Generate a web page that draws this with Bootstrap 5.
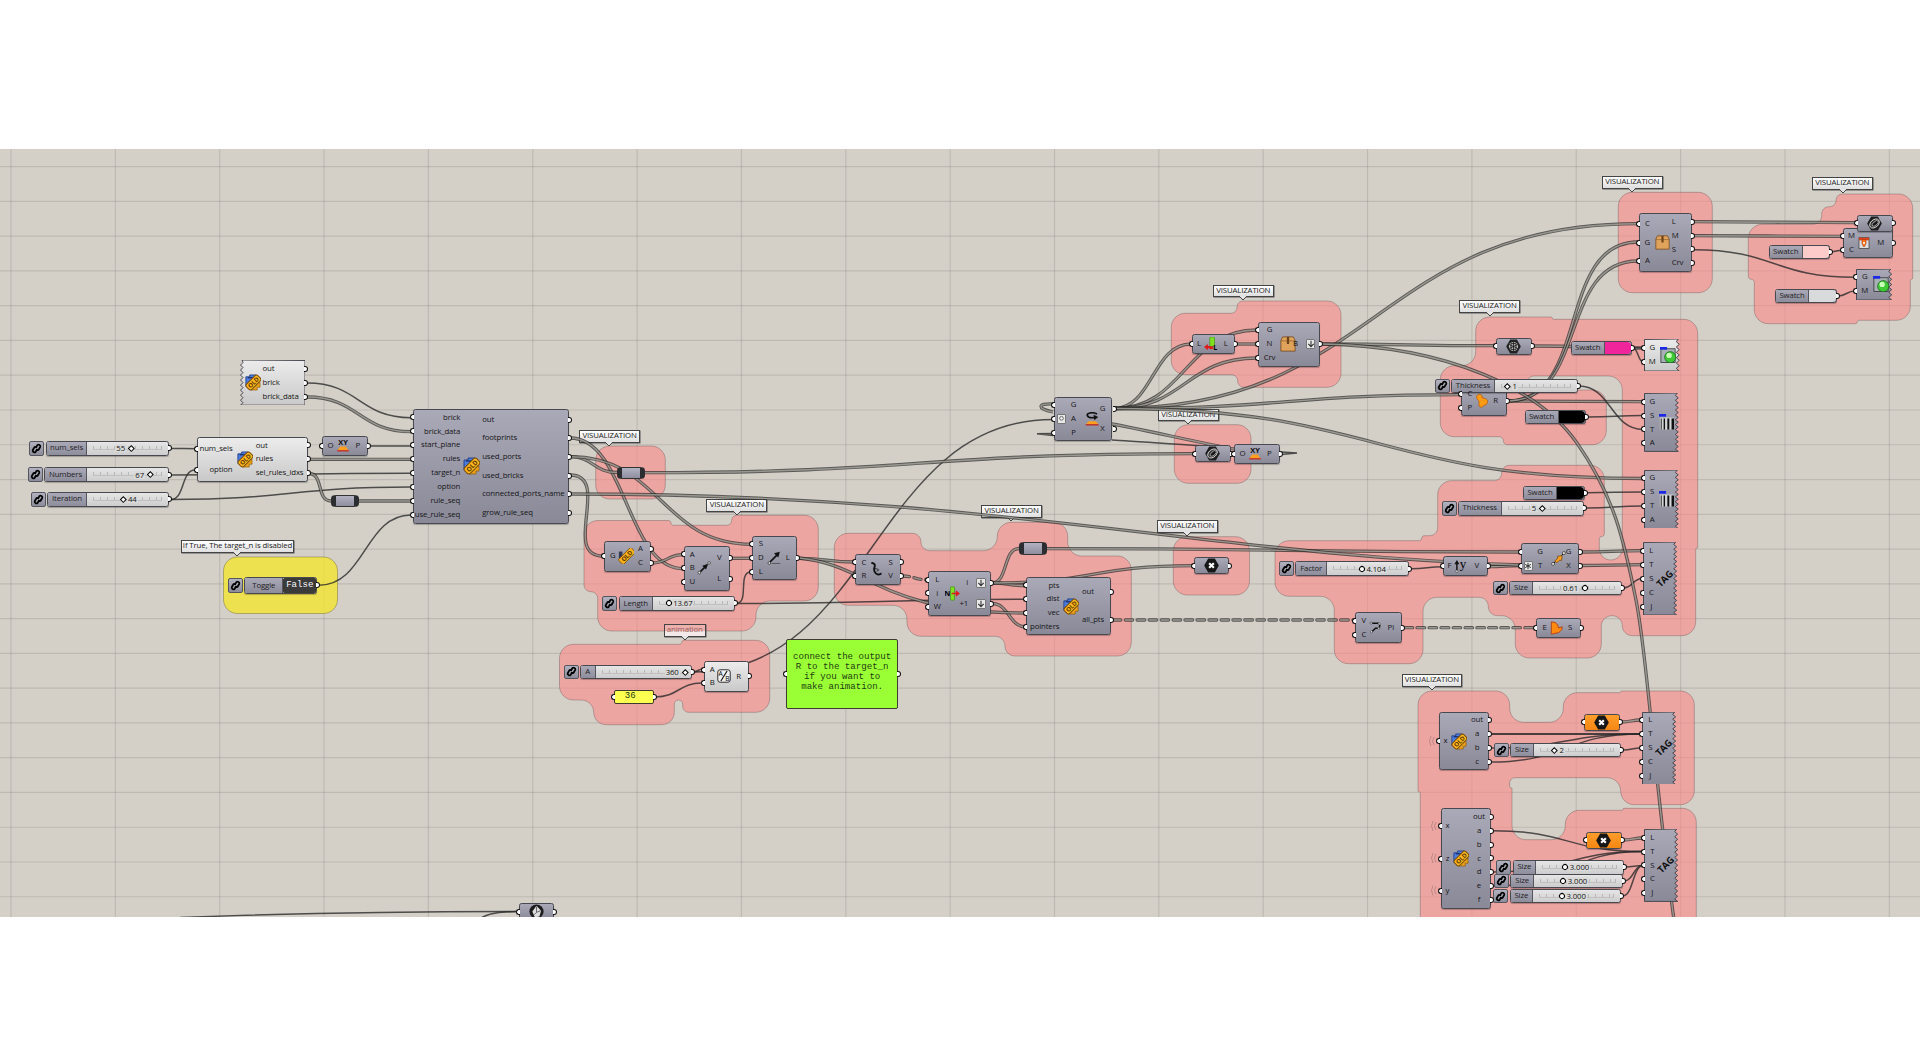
<!DOCTYPE html>
<html lang="en">
<head>
    <meta charset="UTF-8">
    <meta name="viewport" content="width=device-width, initial-scale=1.0">
    <title>Brick aggregation definition</title>
    <link href="https://cdn.jsdelivr.net/npm/bootstrap@5.3.0/dist/css/bootstrap.min.css" rel="stylesheet">
    <style>
        body { font-family: "Open Sans", "Noto Sans", sans-serif; font-size: 7.8px; letter-spacing: -.12px; line-height: 1; color: #161616; padding-top: 149px; }
        .board { height: 768px; background: #d4d0c8; }
        /* everything on the board is placed in page coordinates */
        .board-inner { width: 1920px; height: 1063px; margin-top: -149px; }
        .layer { position: absolute; left: 0; top: 0; pointer-events: none; }
        .pink { fill: rgba(255, 135, 134, .58); stroke: rgba(90, 70, 70, .35); }
        .yellow { fill: rgba(244, 229, 50, .8); stroke: rgba(110, 105, 40, .45); }

        .gh { position: absolute; padding: .5px 0; border: 1px solid #484850; border-radius: 2.5px; background: linear-gradient(#aaa9b8, #8a8998); box-shadow: 0 1px 1px rgba(0, 0, 0, .25); }
        .gh.light { background: linear-gradient(#ececec, #c9c9c9); }
        .gh.orange { background: linear-gradient(#ff9d2c, #f58713); }
        .gh.jagged { background: none; border-color: transparent; box-shadow: none; }
        .gh .ports { z-index: 1; flex-shrink: 0; }
        .plug { position: absolute; top: 50%; width: 4px; height: 6px; margin-top: -3px; background: #fff; border: 1.2px solid #111; }
        .plug.l { left: -4px; border-right: 0; border-radius: 4px 0 0 4px; }
        .plug.r { right: -4px; border-left: 0; border-radius: 0 4px 4px 0; }
        .mini { width: 9.5px; height: 10px; border: 1px solid #777; border-radius: 1px; background: #e8e8e8; padding: 0; }

        .chain { position: absolute; width: 15px; height: 14.5px; padding: 0; border: 1px solid #55555e; border-radius: 2px; background: linear-gradient(#b3b2c0, #8d8c9b); }
        .cap { background: linear-gradient(#aaa9b8, #8e8d9c); border-right: 1px solid #55555e; color: #222; }
        .track { background: linear-gradient(#e6e6e6, #cdcdcd); border-radius: 0 2px 2px 0; }
        .ticks { position: absolute; left: 6px; right: 6px; top: 4px; height: 4px; border-bottom: 1px solid #c0c0c0; border-right: 1px solid #b5b5b5; background: repeating-linear-gradient(90deg, #b8b8b8 0 1px, transparent 1px 7px); }
        .knob { position: absolute; top: 4px; width: 4.6px; height: 4.6px; border: 1.2px solid #000; background: #fff; transform: rotate(45deg); }
        .knob.round { border-radius: 50%; width: 6px; height: 6px; top: 3.2px; border-width: 1.7px; }
        .num { position: absolute; top: 2.2px; padding: 0 1px; background: #dadada; line-height: 8px; }

        .pill { position: absolute; width: 28px; height: 12.5px; border: 1px solid #333; border-radius: 4px; border-left: 5px solid #2c2d30; border-right: 5px solid #2c2d30; background: linear-gradient(#b3b2c2, #8f8e9e); }
        .tag { position: absolute; height: 12.6px; border: 1px solid #444; background: linear-gradient(#fff, #dfdfdf); box-shadow: .5px .5px 0 #555; color: #222; padding-bottom: 1px; }
        .tag.faded { background: linear-gradient(#eeb0ad 50%, #f2e9e8 60%); color: #93605d; }
        .tag svg { position: absolute; bottom: -5px; }
        .note { position: absolute; border: 1px solid #3c3c30; border-radius: 2px; font-family: "Liberation Mono", monospace; font-size: 9.1px; letter-spacing: 0; line-height: 10px; color: #1d3c10; }
    </style>
</head>
<body class="bg-white overflow-hidden">

    <!-- Icons -->
    <svg width="0" height="0" class="position-absolute">
        <defs>
            <symbol id="i-chain" viewBox="0 0 14 14"><g fill="none" stroke="#000" stroke-width="2.3" stroke-linecap="round"><path d="M6.500 5.500L8 2.800a2.200 2.200 0 0 1 3.600 2.400L10 8a1.800 1.800 0 0 1-2.400.8"/><path d="M7.500 8.500L6 11.200a2.200 2.200 0 0 1-3.600-2.400L4 6a1.800 1.800 0 0 1 2.400-.8"/></g></symbol>
            <symbol id="i-py" viewBox="0 0 18 18"><path d="M2 3h4V1h7v6L7 13H2z" fill="#4a7de0" stroke="#1e3c86" stroke-width=".9"/><path d="M4 4h6" stroke="#14265c" stroke-width="1.200"/><path d="M12 9h5v5h-3v3H7l-2-3z" fill="#e9a21b" stroke="#8a5606" stroke-width=".7"/><g transform="rotate(-45 10 9)"><rect x="1.500" y="5" width="17" height="8" rx="2.500" fill="#fbb81f" stroke="#7a4c05" stroke-width="1"/><text x="10" y="11.400" font-size="6.500" font-weight="700" text-anchor="middle" fill="#5a3500">OLD</text></g></symbol>
            <symbol id="i-old" viewBox="0 0 18 18"><path d="M1 4h4v8H1z" fill="#333a55"/><g transform="rotate(-45 10 9)"><rect x="0" y="5" width="20" height="8" rx="1" fill="#f5b11d" stroke="#7a4c05" stroke-width=".9"/><text x="10" y="11.500" font-size="7" font-weight="700" text-anchor="middle" fill="#5a3500">OLD</text></g></symbol>
            <symbol id="i-xy" viewBox="0 0 18 18"><text x="9" y="8" font-size="9.500" font-weight="700" text-anchor="middle" fill="#111">XY</text><path d="M5.500 9.500h7l3.500 5H2z" fill="#ff9f1c"/><path d="M1.500 15.200h15" stroke="#c8261b" stroke-width="1.600"/></symbol>
            <symbol id="i-vec" viewBox="0 0 18 18"><path d="M4 14L13 5" stroke="#111" stroke-width="2"/><path d="M14 4l-2.300 7-5-5z" fill="#111"/><circle cx="3" cy="15" r="1.700" fill="#eee" stroke="#222" stroke-width=".9"/><circle cx="15.500" cy="2.500" r="1.700" fill="#eee" stroke="#222" stroke-width=".9"/></symbol>
            <symbol id="i-line" viewBox="0 0 18 18"><path d="M4 14L13 5" stroke="#111" stroke-width="2"/><path d="M16.500 1l-2 7.500-5.500-5.500z" fill="#111"/><circle cx="3" cy="15.500" r="1.700" fill="#eee" stroke="#222" stroke-width=".9"/><path d="M6 16h11" stroke="#333" stroke-width=".8"/></symbol>
            <symbol id="i-ab" viewBox="0 0 18 18"><rect x="1" y="1" width="16" height="16" rx="3" fill="#f0f0f0" stroke="#222" stroke-width="1.200"/><text x="2" y="8.500" font-size="8.500">A</text><path d="M5 15.500L13 2.500" stroke="#111" stroke-width="1.500"/><text x="10.500" y="16" font-size="8.500">B</text></symbol>
            <symbol id="i-curve" viewBox="0 0 18 18"><path d="M3 1c5 1 5 3 4 6s0 8 4 9c3 .5 4-1 5-1.500" fill="none" stroke="#111" stroke-width="2.400"/><path d="M6 8l6 1.500M10 12l3-2" stroke="#111"/></symbol>
            <symbol id="i-list" viewBox="0 0 18 18"><text x="-1" y="12" font-size="9" font-weight="700">N</text><rect x="6.500" y="1" width="5" height="16" rx="1" fill="#7ee021" stroke="#3c8a10" stroke-width=".8"/><path d="M8 8h5V5l5 4-5 4v-3H8z" fill="#e01a1a"/></symbol>
            <symbol id="i-list2" viewBox="0 0 18 18"><rect x="7.500" y="0" width="6" height="12" rx="1" fill="#7ee021" stroke="#3c8a10" stroke-width=".8"/><path d="M8 11.500H5V9L0 12.800 5 17v-2.500h3z" fill="#e01a1a"/><text x="12" y="17" font-size="9" font-weight="700">L</text><rect x="7" y="12" width="4.500" height="3.500" fill="#e01a1a"/></symbol>
            <symbol id="i-box" viewBox="0 0 18 18"><path d="M3 1h12l2 4v12H1V5z" fill="#dfa35c" stroke="#714619" stroke-width=".9"/><path d="M1 5.500h16" stroke="#8e5d28" stroke-width=".8"/><rect x="7.700" y="1" width="2.600" height="8" fill="#6e4219"/></symbol>
            <symbol id="i-rot" viewBox="0 0 18 18"><path d="M15.500 2.500C9-.5 2 1.500 3 4.500s7 3 10 2.500" fill="none" stroke="#111" stroke-width="2.200"/><path d="M11 3.500l6 3-5 4z" fill="#111"/><path d="M5 11.800h8.500L17 15.500H1.500z" fill="#ff9f1c"/><path d="M1 16.500h16.500" stroke="#c8261b" stroke-width="1.700"/></symbol>
            <symbol id="i-ring" viewBox="0 0 18 18"><path d="M5 .5h8L17.800 9 13 17.500H5L.2 9z" fill="#1e1e1e"/><ellipse cx="9" cy="9" rx="6.500" ry="4.500" transform="rotate(-40 9 9)" fill="#3a3a3a" stroke="#ddd" stroke-width="1.100"/><ellipse cx="9.700" cy="9.500" rx="4.500" ry="2.200" transform="rotate(-40 9 9)" fill="#161616" stroke="#bbb" stroke-width=".9"/></symbol>
            <symbol id="i-x" viewBox="0 0 18 18"><path d="M5 .5h8L17.800 9 13 17.500H5L.2 9z" fill="#161616"/><path d="M6.200 6.200l5.600 5.600M11.800 6.200l-5.600 5.600" stroke="#fff" stroke-width="2.600"/></symbol>
            <symbol id="i-mesh" viewBox="0 0 18 18"><path d="M5 .5h8L17.800 9 13 17.500H5L.2 9z" fill="#222"/><circle cx="9" cy="9" r="5.500" fill="#b5b5b5"/><path d="M9 3.500v11M4 6.500l10 5M14 6.500l-10 5M6 5.500h6v7H6z" stroke="#111" stroke-width=".9" fill="none"/></symbol>
            <symbol id="i-brep" viewBox="0 0 18 18"><circle cx="9" cy="9" r="8.500" fill="#1c1c1c"/><path d="M9 2l5.500 6-2 7-5.500 1-3-7z" fill="#ddd"/><path d="M9 3v7l5-2M9 10l-3 3" stroke="#555" fill="none"/></symbol>
            <symbol id="i-y" viewBox="0 0 18 18"><path d="M4 15V4" stroke="#111" stroke-width="2"/><path d="M4 0L.5 6h7z" fill="#111"/><circle cx="4" cy="15.500" r="1.700" fill="#eee" stroke="#222" stroke-width=".8"/><text x="8" y="11" font-size="18" font-family="Liberation Serif">y</text></symbol>
            <symbol id="i-eval" viewBox="0 0 18 18"><path d="M3 15L15 3" stroke="#111" stroke-width="1.200"/><path d="M4.500 12l4-3.500-1-2 6-1-1 6-2-.5-3.500 3z" fill="#ff9f1c" stroke="#704005" stroke-width=".8"/><circle cx="2.500" cy="15.500" r="1.800" fill="#eee" stroke="#222" stroke-width=".8"/><circle cx="15.500" cy="2.500" r="1.800" fill="#eee" stroke="#222" stroke-width=".8"/></symbol>
            <symbol id="i-poly" viewBox="0 0 18 18"><path d="M2 3h11l2 3-1 4H9l-5 5" fill="none" stroke="#111" stroke-width="2"/><g fill="#eee" stroke="#222" stroke-width=".7"><circle cx="3" cy="3" r="1.500"/><circle cx="14" cy="4" r="1.500"/><circle cx="13.500" cy="10" r="1.500"/><circle cx="3.500" cy="15" r="1.500"/></g></symbol>
            <symbol id="i-srf" viewBox="0 0 18 18"><path d="M3 1l5 1c3 2 4 4 4 7l5-1.500c0 4-2 6-5 7.500L3 17z" fill="#ff8a12" stroke="#b03a10" stroke-width="1.100"/></symbol>
            <symbol id="i-blob" viewBox="0 0 18 18"><path d="M4 1c4-1 6 1 5 4 4 0 8 2 7 6s-5 3-6 5-5 1-5-2 1-4-1-6-3-6 0-7z" fill="#ff9a14" stroke="#b35a06" stroke-width="1"/></symbol>
            <symbol id="i-ball" viewBox="0 0 18 18"><rect x="1" y="2" width="16" height="15.500" fill="#a9b0b5" stroke="#333" stroke-width=".9"/><rect x="0" y="0" width="8" height="3" fill="#1a28e8"/><circle cx="11.500" cy="11.500" r="6.300" fill="#3fc935" stroke="#14601b" stroke-width=".8"/><circle cx="10.300" cy="9.500" r="3" fill="#caffba"/></symbol>
            <symbol id="i-bars" viewBox="0 0 18 18"><rect x="1" y="4" width="16" height="13.500" fill="#d4d6d8"/><rect x="0" y="0" width="8" height="3" fill="#1a28e8"/><path d="M2.500 17.500V5" stroke="#111"/><path d="M6 17.500V5" stroke="#111" stroke-width="1.600"/><path d="M10.500 17.500V5" stroke="#111" stroke-width="2.200"/><path d="M15.500 17.500V5" stroke="#111" stroke-width="2.800"/></symbol>
            <symbol id="i-mat" viewBox="0 0 18 18"><rect x="1.500" y="1" width="15" height="16" fill="#dcdcdc" stroke="#333"/><path d="M1.500 1h15v4h-15z" fill="#d8431b"/><path d="M6 4h6v6l-3 5-3-5z" fill="#ff7b1c" stroke="#a02a08" stroke-width=".8"/><circle cx="9" cy="9" r="1.500" fill="#fff"/></symbol>
            <symbol id="i-tag" viewBox="0 0 18 18"><text x="9" y="12" font-size="9.500" font-weight="700" text-anchor="middle" transform="rotate(-45 9 9)" fill="#111">TAG</text></symbol>
            <symbol id="i-down" viewBox="0 0 8 8"><path d="M4 .8v5.500M1.300 3.800L4 6.600l2.700-2.800" fill="none" stroke="#333" stroke-width="1.100"/></symbol>
            <symbol id="i-star" viewBox="0 0 8 8"><path d="M4 .8v6.400M1.200 2.400l5.600 3.200M6.800 2.400L1.200 5.600" stroke="#333" stroke-width="1"/></symbol>
            <symbol id="i-deg" viewBox="0 0 8 8"><circle cx="4.500" cy="3.300" r="1.900" fill="none" stroke="#666" stroke-width=".9"/></symbol>
        </defs>
    </svg>

    <!-- Canvas -->
    <main class="board overflow-hidden w-100">
        <div class="board-inner position-relative" id="board"></div>
    </main>

    <script>
        const board = document.getElementById("board");
        const add = html => board.insertAdjacentHTML("beforeend", html);

        // Closed polygon with rounded corners
        function blob(points, cls) {
            const n = points.length;
            let d = "";
            points.forEach((p, i) => {
                const a = points[(i + n - 1) % n], b = points[(i + 1) % n];
                const la = Math.hypot(p[0] - a[0], p[1] - a[1]), lb = Math.hypot(b[0] - p[0], b[1] - p[1]);
                const r = Math.min(14, la / 2, lb / 2);
                const s = [p[0] + (a[0] - p[0]) * r / la, p[1] + (a[1] - p[1]) * r / la];
                const e = [p[0] + (b[0] - p[0]) * r / lb, p[1] + (b[1] - p[1]) * r / lb];
                const k = .55;
                d += `${i ? "L" : "M"}${s} C${s[0] + (p[0] - s[0]) * k} ${s[1] + (p[1] - s[1]) * k} ${e[0] + (p[0] - e[0]) * k} ${e[1] + (p[1] - e[1]) * k} ${e}`;
            });
            return `<path class="${cls}" d="${d}Z"/>`;
        }
        const box = (x1, y1, x2, y2, cls = "pink") => blob([[x1, y1], [x2, y1], [x2, y2], [x1, y2]], cls);

        // Grid
        let grid = "";
        for (let x = 11; x < 1920; x += 104.35) grid += `<path d="M${x} 149V917"/>`;
        for (let y = 166.6; y < 917; y += 34.77) grid += `<path d="M0 ${y}H1920"/>`;

        // Groups
        const groups = [
            box(223.5, 557, 337.5, 613.5, "yellow"),
            box(595.7, 446, 665.3, 499),
            blob([[584, 520.5], [671, 520.5], [671, 525.3], [731.7, 525.3], [731.7, 515.3], [818.3, 515.3], [818.3, 601], [756, 601], [756, 631], [597.7, 631], [597.7, 591.7], [584, 591.7]], "pink"),
            blob([[559.5, 644.3], [681.7, 644.3], [681.7, 640.3], [769.7, 640.3], [769.7, 712.3], [682.7, 712.3], [682.7, 700], [674.3, 700], [674.3, 724.7], [593.7, 724.7], [593.7, 700], [559.5, 700]], "pink"),
            blob([[834.3, 533.3], [921, 533.3], [921, 550.7], [997.3, 550.7], [997.3, 522.3], [1067.7, 522.3], [1067.7, 556], [1131.3, 556], [1131.3, 656], [1005, 656], [1005, 636.3], [907, 636.3], [907, 605.3], [834.3, 605.3]], "pink"),
            blob([[1171.3, 313.3], [1237, 313.3], [1237, 301], [1341, 301], [1341, 387.3], [1237.7, 387.3], [1237.7, 374.7], [1171.3, 374.7]], "pink"),
            box(1174.3, 424.7, 1251, 483.3),
            box(1173.3, 536.7, 1249.5, 595),
            blob([[1275, 540.7], [1421.7, 540.7], [1421.7, 535.7], [1437.7, 535.7], [1437.7, 480.7], [1501.7, 480.7], [1501.7, 465.3], [1604.3, 465.3], [1604.3, 536.5], [1599.3, 536.5], [1599.3, 560], [1622.3, 560], [1622.3, 376], [1527, 376], [1527, 390], [1606.3, 390], [1606.3, 444.7], [1503.3, 444.7], [1503.3, 436.7], [1440.3, 436.7], [1440.3, 365.7], [1475.7, 365.7], [1475.7, 317], [1552.3, 317], [1552.3, 319.3], [1697.7, 319.3], [1697.7, 548.3], [1695.7, 548.3], [1695.7, 635.7], [1622.3, 635.7], [1622.3, 615.7], [1601.3, 615.7], [1601.3, 658], [1515.3, 658], [1515.3, 615.7], [1488.3, 615.7], [1488.3, 597.3], [1423, 597.3], [1423, 663.7], [1334.3, 663.7], [1334.3, 596.3], [1275, 596.3]], "pink"),
            box(1618.3, 192.3, 1712.3, 292.7),
            blob([[1748.3, 224.3], [1821.7, 224.3], [1821.7, 206.7], [1836, 206.7], [1836, 194], [1912.7, 194], [1912.7, 279.3], [1910.3, 279.3], [1910.3, 320.3], [1857.3, 320.3], [1857.3, 323.7], [1754.3, 323.7], [1754.3, 279.3], [1748.3, 279.3]], "pink"),
            blob([[1418, 691], [1509.7, 691], [1509.7, 722.3], [1563.3, 722.3], [1563.3, 692.7], [1620.7, 692.7], [1620.7, 691], [1694.3, 691], [1694.3, 804.7], [1620.7, 804.7], [1620.7, 777.7], [1509.7, 777.7], [1509.7, 787.7], [1512, 787.7], [1512, 839.7], [1565.3, 839.7], [1565.3, 810.3], [1623, 810.3], [1623, 808.3], [1696.3, 808.3], [1696.3, 940], [1420.3, 940], [1420.3, 791.7], [1418, 791.7]], "pink")
        ];
        add(`<svg class="layer" width="1920" height="1063"><g stroke="#000" stroke-opacity=".1" stroke-width="1.2">${grid}</g>${groups.join("")}</svg>`);

        // Labels above groups: x, y, width, pointer x, text
        [
            [181, 540.3, 113, 237, "If True, The target_n is disabled"],
            [579.3, 430.3, 60.5, 609.3, "VISUALIZATION"],
            [706.3, 499, 61, 737, "VISUALIZATION"],
            [664, 624.3, 41.5, 684.5, "animation", "faded"],
            [981.3, 505.3, 60.5, 1011, "VISUALIZATION"],
            [1213, 284.7, 60.5, 1243, "VISUALIZATION"],
            [1158, 408.7, 60.5, 1188, "VISUALIZATION"],
            [1157, 520.3, 60.5, 1187, "VISUALIZATION"],
            [1459.3, 300.3, 60.5, 1489.7, "VISUALIZATION"],
            [1602, 176.3, 60.5, 1632, "VISUALIZATION"],
            [1812, 177.3, 60.5, 1843, "VISUALIZATION"],
            [1401.7, 674.3, 60.5, 1432, "VISUALIZATION"]
        ].forEach(([x, y, w, px, text, cls = ""]) => add(
            `<div class="tag ${cls} d-flex align-items-center justify-content-center text-nowrap" style="left:${x}px;top:${y}px;width:${w}px">${text}
                <svg width="8" height="5" style="left:${px - x - 5}px"><path d="M0 0L4 4L8 0" fill="#e4e4e4" stroke="#444"/></svg></div>`));

        // Wires: x1, y1, x2, y2, kind (s single, d double, t tree), handle length
        const wires = [
            [307, 383, 411, 417.7, "s"], [307, 397, 411, 431.7, "d"],
            [171, 448.5, 196, 448.7, "s"], [171, 475, 411, 473.3, "s"],
            [171, 499.5, 195, 470, "s", 14], [171, 499.5, 411, 487, "s"],
            [309, 459.3, 411, 459.3, "d"], [309, 473.5, 331, 501, "d", 15], [359, 501, 411, 501, "d"],
            [369, 446, 411, 446, "s"], [319, 585.3, 411, 515, "s"],
            [570, 438, 683, 568.7, "d"], [652, 563, 683, 554.7, "d"],
            [570, 456.7, 617, 472.5, "d"], [570, 456.7, 752, 544.3, "d"], [570, 475, 603, 556, "d", 42],
            [732, 558.3, 751, 558.3, "d"], [736, 603.5, 751, 572, "s", 14], [736, 603.5, 1026, 599.3, "s"],
            [799, 558.3, 855, 562, "d"], [902, 576, 927, 579.7, "t"],
            [693, 672, 1053, 419.5, "s"], [693, 672, 703, 669, "s"], [655, 697, 702, 683, "s"],
            [1112, 424, 1234, 449, "d", 5], [1112, 440, 1205, 446, "s", 5],
            [992, 583, 1026, 585.7, "d"], [992, 583, 1019, 548.5, "d", 16], [992, 603.5, 1026, 627, "d"],
            [992, 583, 1193, 565.7, "d"], [1047, 548.7, 1521, 552, "d"],
            [1113, 620, 1354, 620, "t"], [1405, 627.7, 1535, 627.7, "t"],
            [1411, 568.7, 1443, 566.7, "s"], [1489, 566.7, 1521, 565.5, "d"],
            [1581, 552, 1643, 550.7, "d"], [1581, 565.5, 1643, 564.7, "d"], [1623, 588, 1643, 578.3, "s"],
            [645, 472.7, 1194, 453.7, "d"],
            [1114, 408.5, 1191, 344, "d"], [1114, 408.5, 1257, 330, "d"], [1114, 408.5, 1257, 358, "d"],
            [1114, 408.5, 1638, 223.7, "d"], [1114, 408.5, 1460, 394.7, "d"], [1114, 408.5, 1642, 478.5, "d"],
            [1236, 344, 1257, 344, "d"], [1322, 344, 1495, 345.7, "d"], [1533, 346, 1643, 348, "d"],
            [1633, 347.7, 1643, 362, "s"], [1633, 347.7, 1643, 348, "s"],
            [1508, 401, 1643, 401.7, "d"], [1508, 401, 1638, 242, "d", 82], [1508, 401, 1638, 261, "d", 80],
            [1579, 386, 1643, 429.5, "s"], [1588, 417, 1643, 415.5, "s"], [1587, 492.7, 1643, 492, "s"], [1586, 508, 1643, 506, "s"],
            [1693, 221.7, 1856, 222.7, "d"], [1693, 235.7, 1842, 236.3, "d"], [1693, 249.7, 1855, 277.3, "s"],
            [1831, 251.7, 1842, 250.3, "s"], [1838, 296, 1855, 291, "s"],
            [1491, 734, 1641, 734, "s"], [1491, 748, 1641, 734, "s"], [1491, 762, 1641, 734, "s"], [1491, 734, 1641, 734, "s"],
            [1621, 722, 1641, 720, "d"], [1623, 750, 1641, 748, "s"],
            [1493, 830.7, 1643, 851.5, "s"], [1493, 872, 1643, 851.5, "s"], [1493, 886, 1643, 851.5, "s"],
            [1623, 840, 1643, 838, "d"], [1625, 867, 1643, 865.5, "s"], [1624, 881, 1643, 865.5, "s"], [1623, 896, 1643, 865.5, "s"]
        ].map(([x1, y1, x2, y2, kind, k = (x2 - x1) / 2]) => [`M${x1} ${y1}C${x1 + k} ${y1} ${x2 - k} ${y2} ${x2} ${y2}`, kind]);
        // long wires with their own shape
        wires.push(
            ["M570 494C1000 494 1200 555 1521 565", "d"],
            ["M799 558C870 565 880 613 1026 613", "d"],
            ["M1322 344C1450 346 1540 390 1577 443S1624 540 1636 600S1652 760 1674 920", "d"],
            ["M1053 404C1037 403 1037 409 1053 412", "d"],
            ["M1053 433.500L1037 433.800L1053 435.500", "s"],
            ["M1281 452L1297 453L1281 454.500", "s"],
            ["M180 917.500C300 913 400 911.500 517 911.500", "s"],
            ["M482 917.500C490 913 500 912 517 911.500", "s"]
        );
        const draw = ([d, kind]) => {
            if (kind == "s") return `<path d="${d}" stroke="#2b2b2a" stroke-opacity=".8" stroke-width="1.5"/>`;
            const dash = kind == "t" ? `stroke-dasharray="7.500 4.500" stroke-linecap="round"` : "";
            return `<path d="${d}" ${dash} stroke="#2b2b2a" stroke-opacity=".72" stroke-width="3.300"/><path d="${d}" ${dash} stroke="#b5b2aa" stroke-opacity=".7" stroke-width="1.400"/>`;
        };
        // broadcast marks next to the free script inputs
        const marks = [[1436, 741], [1438, 826], [1438, 858], [1438, 890.5]].map(([x, y]) =>
            `<path d="M${x - 2} ${y - 4}q-3 4 0 8M${x - 5} ${y - 5}q-3 5 0 10" stroke="#8a6a68" stroke-opacity=".6" stroke-width=".8"/>`).join("");
        add(`<svg class="layer" width="1920" height="1063" fill="none">${wires.map(draw).join("")}${marks}</svg>`);

        const icon = (name, s = 17) => `<svg class="flex-shrink-0 overflow-visible" width="${s}" height="${s}"><use href="#i-${name}"/></svg>`;
        const mini = (name, cls = "", style = "") => `<span class="mini d-inline-flex align-items-center justify-content-center flex-shrink-0 ${cls}" style="${style}">${icon(name, 8)}</span>`;
        const plug = side => `<i class="plug ${side}"></i>`;
        const place = (x, y, x2, y2) => `left:${x}px;top:${y}px;width:${x2 - x}px;height:${y2 - y}px`;

        // Component. An output written "name|down" gets a small modifier button.
        function node(x, y, x2, y2, o) {
            const w = x2 - x, h = y2 - y;
            const column = (list, side, width, align) => `<div class="ports d-flex flex-column" style="width:${width}px">` +
                (list || []).map(p => {
                    const [name, glyph] = p.split("|");
                    return `<div class="flex-fill d-flex align-items-center position-relative text-nowrap justify-content-${align}" style="flex-basis:0">${o.jag == side ? "" : plug(side)}<span>${name}</span>${glyph ? mini(glyph, "ms-2 me-1") : ""}</div>`;
                }).join("") + "</div>";
            let back = "";
            if (o.jag) {
                const n = Math.round(h / 5), step = h / n;
                let d = o.jag == "r" ? `M${w - 2} 0` : `M2 0`;
                for (let i = 0; i < n; i++) {
                    const a = o.jag == "r" ? w - 4 : 3, b = o.jag == "r" ? w - 1 : .5;
                    d += `L${a} ${(i + .5) * step}L${b} ${(i + 1) * step}`;
                }
                d += o.jag == "r" ? `H.5V.5Z` : `H${w - .5}V.5Z`;
                const [c1, c2] = o.cls == "light" ? ["#ececec", "#c9c9c9"] : ["#aaa9b8", "#8a8998"];
                const id = "g" + Math.round(x) + Math.round(y);
                back = `<svg class="layer" style="left:-1px;top:-1px" width="${w}" height="${h}"><linearGradient id="${id}" x2="0" y2="1"><stop stop-color="${c1}"/><stop offset="1" stop-color="${c2}"/></linearGradient><path d="${d}" fill="url(#${id})" stroke="#484850"/></svg>`;
            }
            add(`<div class="gh d-flex ${o.cls || ""} ${o.jag ? "jagged" : ""}" style="${place(x, y, x2, y2)}">${back}
                ${column(o.in, "l", o.iw ?? 15, o.ia || "center")}
                <div class="ports flex-fill d-flex align-items-center justify-content-center" style="width:0">${icon(o.icon, o.size)}</div>
                ${column(o.out, "r", o.ow ?? 15, o.oa || "center")}</div>`);
        }
        // Parameter capsule: one input, one output and an icon
        const param = (x, y, name, cls) => node(x, y, x + 35.6, y + 17, { cls, in: [""], out: [""], iw: 3, ow: 3, icon: name, size: 15 });

        node(239.5, 360.3, 305, 405.5, { cls: "light", jag: "l", out: ["out", "brick", "brick_data"], iw: 2, ow: 41.5, oa: "start", icon: "py" });
        node(196.5, 437, 307.7, 481.7, { cls: "light", in: ["num_sels", "option"], out: ["out", "rules", "sel_rules_idxs"], iw: 35, ia: "end", ow: 51, oa: "start", icon: "py" });
        node(322, 436.3, 367.7, 456, { in: ["O"], out: ["P"], ow: 18, icon: "xy", size: 14 });
        node(412.7, 409, 568.7, 523.5, { in: ["brick", "brick_data", "start_plane", "rules", "target_n", "option", "rule_seq", "use_rule_seq"], out: ["out", "footprints", "used_ports", "used_bricks", "connected_ports_name", "grow_rule_seq"], iw: 46.5, ia: "end", ow: 85.5, oa: "start", icon: "py", size: 18 });
        node(604.3, 541, 651, 571.5, { in: ["G"], out: ["A", "C"], ow: 19, icon: "old", size: 16 });
        node(683.7, 546, 730.3, 590.7, { in: ["A", "B", "U"], out: ["V", "L"], ow: 20, icon: "vec", size: 14 });
        node(752.3, 535.7, 797.3, 580.3, { in: ["S", "D", "L"], out: ["L"], ow: 17, icon: "line", size: 14 });
        node(703.7, 661.3, 749, 691.7, { cls: "light", in: ["A", "B"], out: ["R"], ow: 19, icon: "ab", size: 14 });
        node(855.3, 554, 901, 584.7, { in: ["C", "R"], out: ["S", "V"], ow: 19, icon: "curve", size: 14 });
        node(927.7, 571.3, 990.7, 615.7, { in: ["L", "i", "W"], out: ["i|down", "+1|down"], iw: 17, ow: 31, oa: "end", icon: "list", size: 15 });
        node(1026.3, 577, 1111, 635.3, { in: ["pts", "dist", "vec", "pointers"], out: ["out", "all_pts"], iw: 32, ia: "end", ow: 28, oa: "start", icon: "py" });
        node(1054, 396.7, 1112, 441.3, { in: ["G", "A", "P"], out: ["G", "X"], iw: 37, ow: 21, icon: "rot", size: 14 });
        add(mini("deg", "position-absolute", "left:1056.500px;top:414px"));
        node(1192, 334.3, 1234.7, 353.7, { in: ["L"], out: ["L"], iw: 12, ow: 16, icon: "list2", size: 14 });
        node(1258, 321.7, 1320.3, 366.7, { in: ["G", "N", "Crv"], out: ["B|down"], iw: 21, ow: 24, oa: "end", icon: "box", size: 16 });
        param(1195, 445.3, "ring");
        node(1234, 444, 1279.7, 463.7, { in: ["O"], out: ["P"], ow: 19, icon: "xy", size: 14 });
        param(1193.5, 557.2, "x");
        node(1443, 556.3, 1487.7, 576.3, { in: ["F"], out: ["V"], iw: 11, ow: 20, icon: "y", size: 13 });
        node(1521, 543.3, 1579, 574.3, { in: ["G", "T"], out: ["G", "X"], iw: 36, ow: 21, icon: "eval", size: 15 });
        add(mini("star", "position-absolute", "left:1523.500px;top:560.500px"));
        node(1355.3, 612.3, 1402.3, 643.3, { in: ["V", "C"], out: ["Pl"], ow: 21, icon: "poly", size: 13 });
        node(1536, 618, 1580.7, 637.7, { in: ["E"], out: ["S"], ow: 19, icon: "srf", size: 14 });
        param(1496, 337.5, "mesh");
        node(1643.7, 339, 1680, 371, { cls: "light", jag: "r", in: ["G", "M"], ow: 3, icon: "ball", size: 16 });
        node(1461.3, 386, 1506.7, 416.3, { in: ["C", "P"], out: ["R"], ow: 20, icon: "blob", size: 14 });
        node(1643.7, 393.3, 1679, 451.7, { jag: "r", in: ["G", "S", "T", "A"], ow: 3, icon: "bars", size: 16 });
        node(1643.7, 469.7, 1679, 528.3, { jag: "r", in: ["G", "S", "T", "A"], ow: 3, icon: "bars", size: 16 });
        node(1643.3, 542, 1678, 615, { jag: "r", in: ["L", "T", "S", "C", "J"], ow: 5, iw: 14, icon: "tag", size: 18 });
        node(1639.3, 213.3, 1691.7, 271.7, { in: ["C", "G", "A"], out: ["L", "M", "S", "Crv"], ow: 19, oa: "start", iw: 14, icon: "box", size: 15 });
        node(1843, 228, 1892.7, 258.3, { in: ["M", "C"], out: ["M"], ow: 22, icon: "mat", size: 12 });
        param(1857, 214.5, "ring");
        node(1856.3, 268.7, 1893, 299.7, { jag: "r", in: ["G", "M"], ow: 3, icon: "ball", size: 16 });
        node(1439, 712, 1489, 770, { in: ["x"], out: ["out", "a", "b", "c"], iw: 11, ow: 22, icon: "py", size: 17 });
        node(1441, 808.3, 1491, 908.7, { in: ["x", "z", "y"], out: ["out", "a", "b", "c", "d", "e", "f"], iw: 11, ow: 22, icon: "py", size: 17 });
        param(1584, 713.5, "x", "orange");
        param(1586, 831.5, "x", "orange");
        node(1642.3, 711.7, 1677, 784.3, { jag: "r", in: ["L", "T", "S", "C", "J"], ow: 5, iw: 14, icon: "tag", size: 18 });
        node(1644.3, 829.3, 1679, 901.7, { jag: "r", in: ["L", "T", "S", "C", "J"], ow: 5, iw: 14, icon: "tag", size: 18 });
        param(518.5, 903, "brep");

        [[331, 494.7], [616.5, 466.5], [1018.5, 542.3]].forEach(([x, y]) => add(`<div class="pill" style="left:${x}px;top:${y}px"></div>`));

        // Sliders: chain x, x, label end, right edge, y, label, knob x, value, value side, round knob
        [
            [29, 46, 86, 169, 441, "num_sels", 131, "55", "l"],
            [28, 44, 86, 169, 467.4, "Numbers", 150, "67", "l"],
            [31, 47, 86, 169, 492, "Iteration", 122.5, "44", "r"],
            [602, 618.5, 652, 734.7, 596.2, "Length", 667.7, "13.67", "r", 1],
            [564, 580, 594.5, 692, 664.7, "A", 684.7, "360", "l"],
            [1279, 1295.3, 1326, 1409.3, 561.4, "Factor", 1361, "4.104", "r", 1],
            [1493, 1509, 1532, 1621.7, 580.8, "Size", 1584, "0.61", "l", 1],
            [1435, 1451, 1494, 1577.7, 378.5, "Thickness", 1507, "1", "r"],
            [1442, 1458, 1500.500, 1584, 501, "Thickness", 1542, "5", "l"],
            [1493.5, 1509.7, 1533, 1621, 742.8, "Size", 1554, "2", "r"],
            [1496, 1512.7, 1535, 1623.7, 860, "Size", 1564.3, "3.000", "r", 1],
            [1494, 1510.3, 1533, 1622.7, 873.5, "Size", 1562.3, "3.000", "r", 1],
            [1492.5, 1509.7, 1532, 1621, 888.8, "Size", 1561, "3.000", "r", 1]
        ].forEach(([cx, x, split, x2, y, label, knob, value, side, round]) => {
            const near = side == "l" ? `right:${x2 - knob + 4}px` : `left:${knob - split + 3.5}px`;
            add(`<div class="chain d-flex align-items-center justify-content-center" style="left:${cx}px;top:${y}px">${icon("chain", 11)}</div>
                <div class="gh d-flex p-0" style="${place(x, y, x2, y + 14.5)}">
                    <div class="cap d-flex align-items-center justify-content-center" style="width:${split - x}px">${label}</div>
                    <div class="track position-relative flex-fill"><div class="ticks"></div>
                        <span class="num" style="${near}">${value}</span>
                        <i class="knob ${round ? "round" : ""}" style="left:${knob - split - 3}px"></i></div>${plug("r")}
                </div>`);
        });

        // Colour swatches
        [
            [1570.7, 340.6, "#f0259c"], [1524.5, 410, "#000"], [1523, 486, "#000"],
            [1768.7, 244.5, "#fdcbc9"], [1775, 289, "#d9dadb"]
        ].forEach(([x, y, colour]) => add(
            `<div class="gh d-flex p-0" style="${place(x, y, x + 61.8, y + 14.3)}">
                <div class="cap d-flex align-items-center justify-content-center" style="width:33px">Swatch</div>
                <div class="flex-fill rounded-end-1" style="background:${colour}"></div>${plug("r")}</div>`));

        // Toggle and panels
        add(`<div class="chain d-flex align-items-center justify-content-center" style="left:228px;top:578px">${icon("chain", 11)}</div>
            <div class="gh d-flex p-0" style="${place(244.3, 577.3, 317.3, 593.7)}">
                <div class="cap d-flex align-items-center justify-content-center" style="width:38px">Toggle</div>
                <div class="note position-static flex-fill text-center text-light" style="background:#3b3b3b;line-height:11px">False</div>${plug("r")}</div>
            <div class="note text-center" style="${place(614.3, 690.3, 654, 704.5)};background:#ffff52">${plug("l")}<span class="d-block me-2 pt-0">36</span>${plug("r")}</div>
            <div class="note text-center d-flex align-items-center justify-content-center" style="${place(786.3, 639.3, 898, 709)};background:#9bff35">${plug("l")}
                <div class="pb-1">connect the output<br>R to the target_n<br>if you want to<br>make animation.</div>${plug("r")}</div>`);
    </script>

    <script src="https://cdn.jsdelivr.net/npm/bootstrap@5.3.0/dist/js/bootstrap.bundle.min.js"></script>
</body>
</html>
